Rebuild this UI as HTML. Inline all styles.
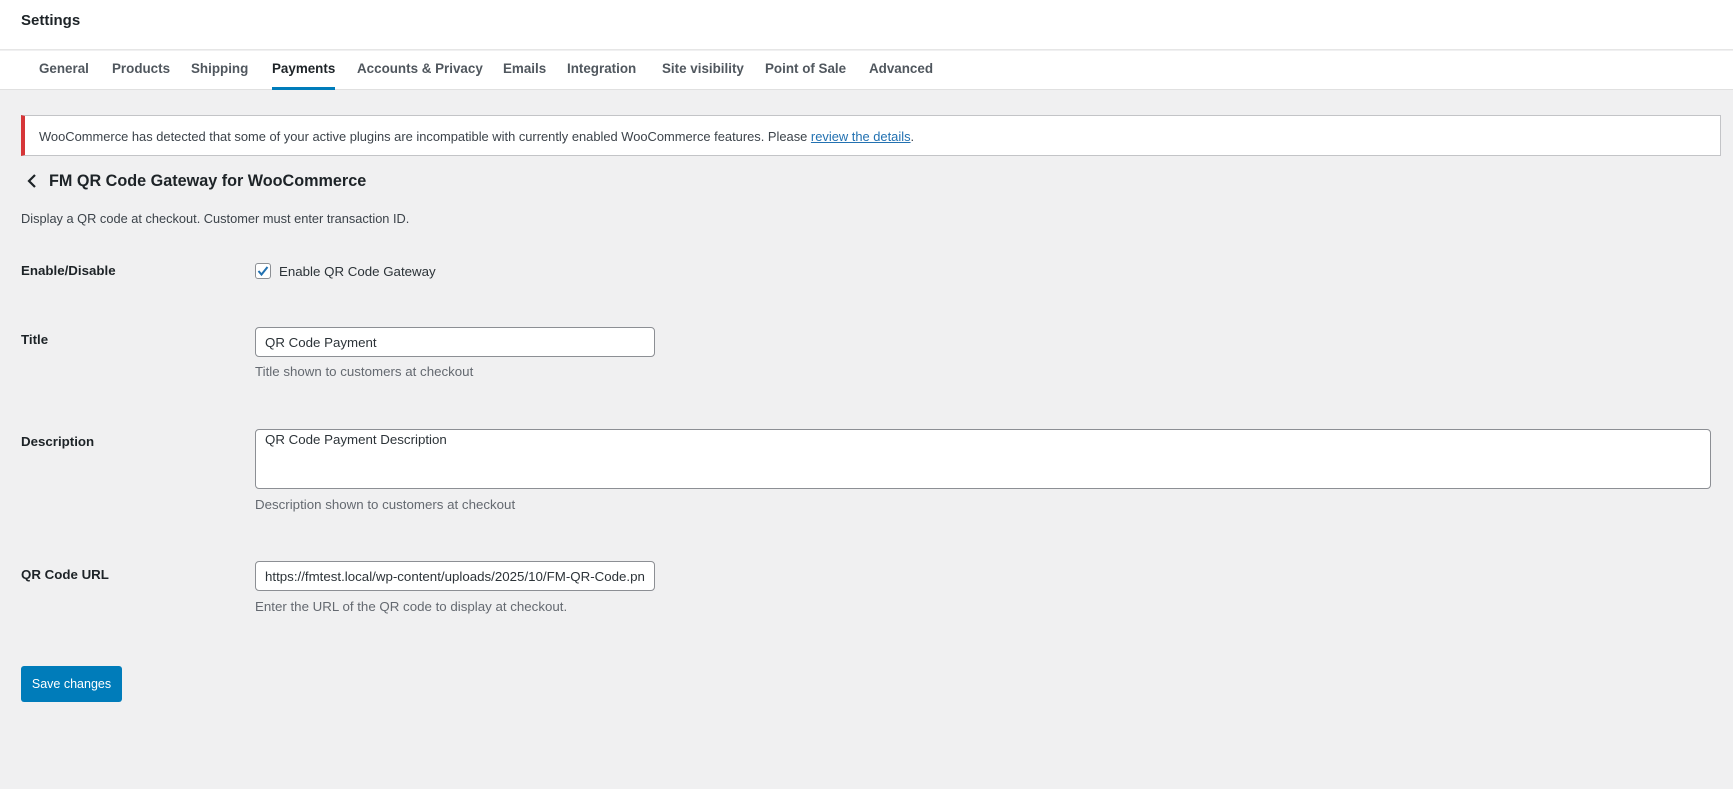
<!DOCTYPE html>
<html><head><meta charset="utf-8"><style>
*{box-sizing:border-box;margin:0;padding:0}
body{width:1733px;height:789px;background:#f0f0f1;font-family:"Liberation Sans",sans-serif;color:#1d2327;position:relative;overflow:hidden;font-size:13.3px}
.abs{position:absolute;white-space:nowrap}
#hdr{position:absolute;left:0;top:0;width:1733px;height:50px;background:#fff;border-bottom:1px solid #e6e6e6}
#tabs{position:absolute;left:0;top:51px;width:1733px;height:39px;background:#fff;border-bottom:1px solid #e0e0e0}
.tab{position:absolute;top:10px;font-size:13.4px;font-weight:bold;color:#50575e;white-space:nowrap}
.lbl{position:absolute;left:21px;font-weight:bold;font-size:13.3px}
.inp{position:absolute;left:255px;background:#fff;border:1px solid #8c8f94;border-radius:4px;font-size:13.3px;padding:7px 9px;color:#2c3338;white-space:nowrap;overflow:hidden}
.help{position:absolute;left:255px;color:#646970;font-size:13.3px;white-space:nowrap}
</style></head><body>
<div id="hdr"><div class="abs" style="left:21px;top:12px;font-size:15px;font-weight:bold">Settings</div></div>
<div id="tabs">
<span class="tab" style="left:39px">General</span>
<span class="tab" style="left:112px">Products</span>
<span class="tab" style="left:191px">Shipping</span>
<span class="tab" style="left:272px;color:#1d2327">Payments</span>
<div style="position:absolute;left:272px;top:36px;width:63px;height:3px;background:#007cba"></div>
<span class="tab" style="left:357px">Accounts &amp; Privacy</span>
<span class="tab" style="left:503px">Emails</span>
<span class="tab" style="left:567px">Integration</span>
<span class="tab" style="left:662px">Site visibility</span>
<span class="tab" style="left:765px">Point of Sale</span>
<span class="tab" style="left:869px">Advanced</span>
</div>
<div style="position:absolute;left:21px;top:115px;width:1700px;height:41px;background:#fff;border:1px solid #c3c4c7;border-left:4px solid #d63638"></div>
<div class="abs" style="left:39px;top:129px;font-size:12.9px;color:#3c434a">WooCommerce has detected that some of your active plugins are incompatible with currently enabled WooCommerce features. Please <a style="color:#2271b1;text-decoration:underline">review the details</a>.</div>
<svg class="abs" style="left:26px;top:173px" width="14" height="16" viewBox="0 0 14 16"><path d="M9 2 L3 8 L9 14" stroke="#1d2327" stroke-width="2.2" fill="none"/></svg>
<div class="abs" style="left:49px;top:172px;font-size:16.2px;font-weight:bold">FM QR Code Gateway for WooCommerce</div>
<div class="abs" style="left:21px;top:211px;font-size:12.8px;color:#3c434a">Display a QR code at checkout. Customer must enter transaction ID.</div>
<div class="lbl" style="top:263px">Enable/Disable</div>
<div style="position:absolute;left:255px;top:263px;width:16px;height:16px;border:1px solid #8c8f94;border-radius:3px;background:#fff"></div>
<svg class="abs" style="left:256px;top:264px" width="14" height="14" viewBox="0 0 14 14"><path d="M2.5 7 L5.5 10.5 L11.5 3" stroke="#2271b1" stroke-width="2" fill="none"/></svg>
<div class="abs" style="left:279px;top:264px;font-size:13.3px;color:#2c3338">Enable QR Code Gateway</div>
<div class="lbl" style="top:332px">Title</div>
<div class="inp" style="top:327px;width:400px;height:30px">QR Code Payment</div>
<div class="help" style="top:364px">Title shown to customers at checkout</div>
<div class="lbl" style="top:434px">Description</div>
<div class="inp" style="top:429px;width:1456px;height:60px;padding-top:2px">QR Code Payment Description</div>
<div class="help" style="top:497px">Description shown to customers at checkout</div>
<div class="lbl" style="top:567px">QR Code URL</div>
<div class="inp" style="top:561px;width:400px;height:30px"><div style="width:380px;overflow:hidden">https://fmtest.local/wp-content/uploads/2025/10/FM-QR-Code.png</div></div>
<div class="help" style="top:599px">Enter the URL of the QR code to display at checkout.</div>
<div style="position:absolute;left:21px;top:666px;width:101px;height:36px;background:#007cba;border-radius:3px;color:#fff;font-size:12.5px;text-align:center;line-height:36px">Save changes</div>
</body></html>
